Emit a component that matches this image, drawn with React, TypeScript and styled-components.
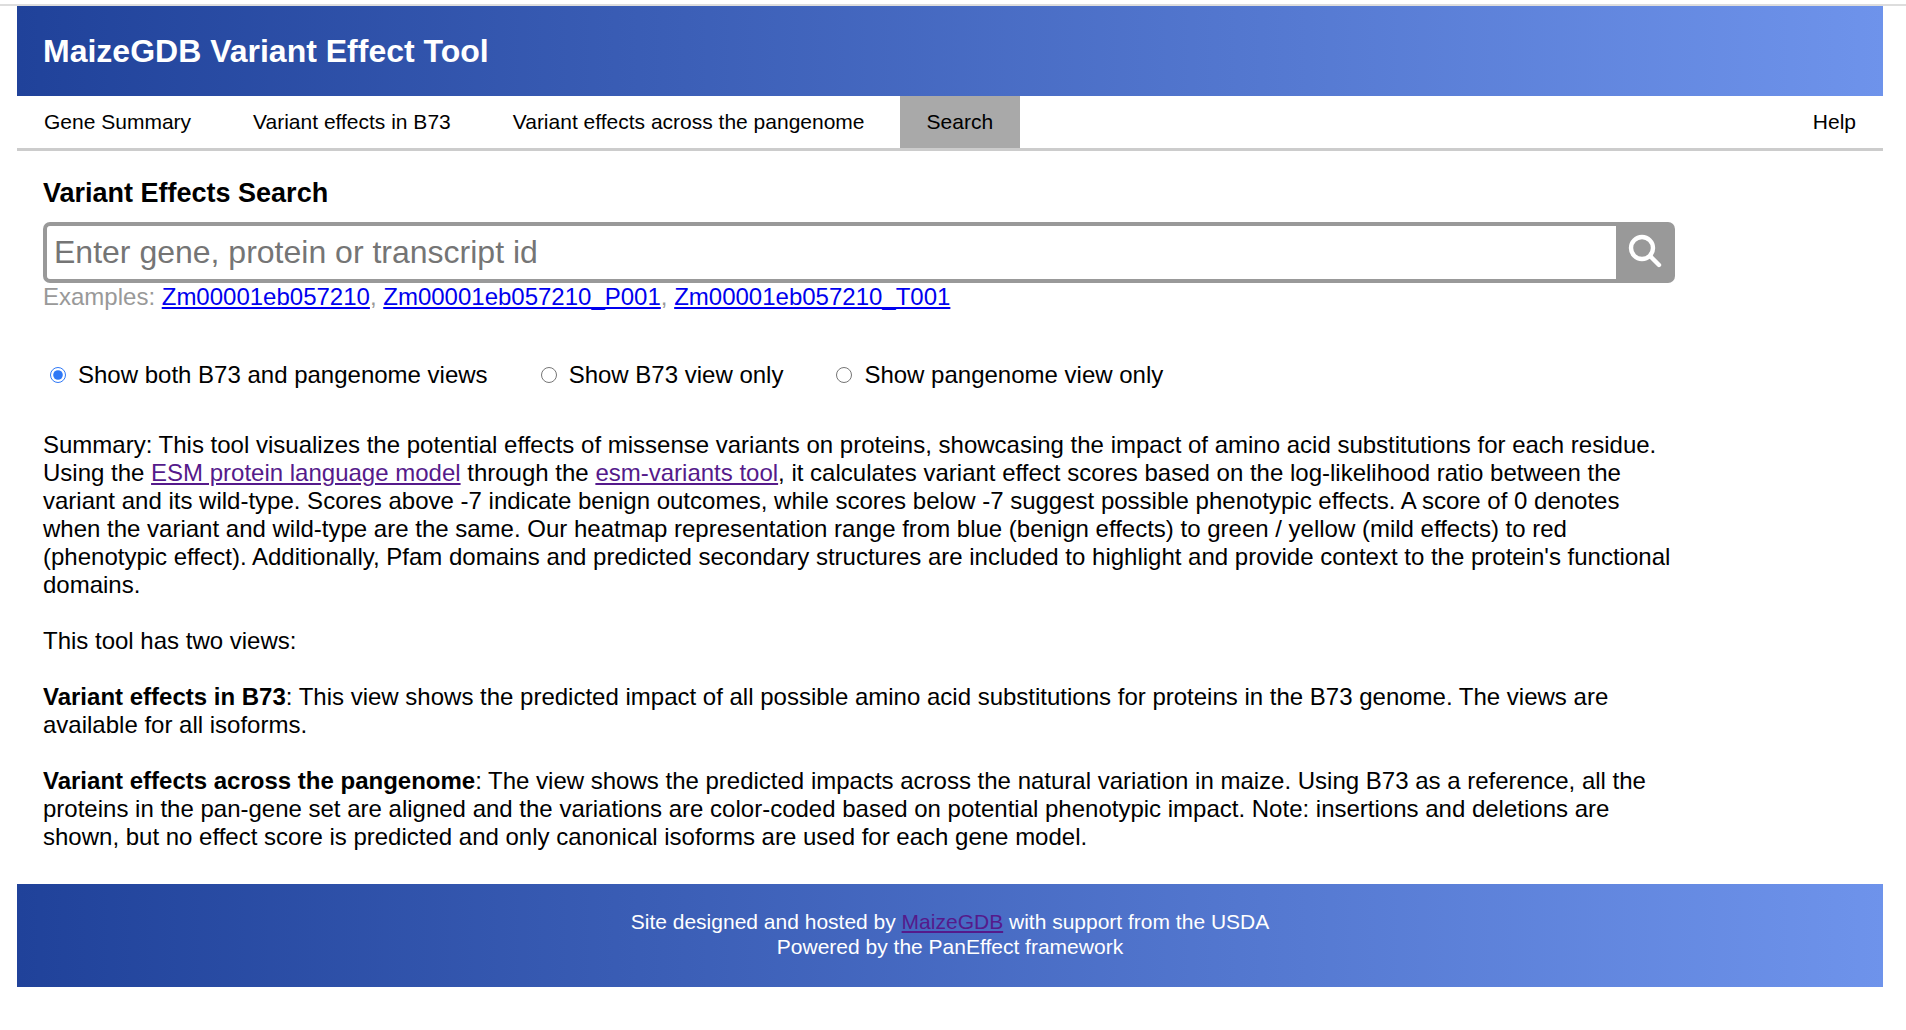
import React, { useState } from "react";
import styled, { createGlobalStyle } from "styled-components";

const GlobalStyle = createGlobalStyle`
  *, *::before, *::after { box-sizing: border-box; }
  body {
    margin: 0;
    background: #fff;
    color: #000;
    font-family: "Liberation Sans", Arial, Helvetica, sans-serif;
    font-size: 24px;
    line-height: 28px;
  }
`;

const brandGradient = "linear-gradient(to right, #20429a, #6e93eb)";

const Page = styled.div`
  margin-top: 4px;
  border-top: 2px solid #ddd;
  padding: 0 23px 0 17px;
`;

const Header = styled.header`
  padding: 27px 26px;
  background: ${brandGradient};
  color: #fff;
`;

const SiteTitle = styled.h1`
  margin: 0;
  font-size: 32px;
  line-height: 36px;
`;

const Nav = styled.nav`
  display: flex;
  gap: 8px;
  border-bottom: 3px solid #ccc;
`;

const Tab = styled.a<{ $active?: boolean; $end?: boolean }>`
  padding: 13px 27px 14px;
  margin-left: ${(p) => (p.$end ? "auto" : "0")};
  background: ${(p) => (p.$active ? "#a9a9a9" : "transparent")};
  color: #000;
  font-size: 21px;
  line-height: 25px;
  text-decoration: none;
`;

const Main = styled.main`
  padding: 27px 27px 33px 26px;
`;

const Column = styled.div`
  width: 90%;
`;

const Heading = styled.h2`
  margin: 0 0 13px;
  font-size: 27px;
  line-height: 31px;
`;

const SearchForm = styled.form`
  display: flex;
  height: 61px;
`;

const SearchInput = styled.input`
  flex: 1;
  min-width: 0;
  border: 4px solid #999;
  border-right: 0;
  border-radius: 7px 0 0 7px;
  padding: 0 7px;
  font-family: inherit;
  font-size: 32px;
  outline: none;
  &::placeholder { color: #757575; opacity: 1; }
`;

const SearchButton = styled.button`
  display: flex;
  justify-content: center;
  width: 59px;
  border: 0;
  border-radius: 0 7px 7px 0;
  padding: 12px 0 0;
  background: #999;
  color: #fff;
  cursor: pointer;
`;

const Examples = styled.div`
  color: #999;
`;

const Link = styled.a<{ $visited?: boolean }>`
  color: ${(p) => (p.$visited ? "#551a8b" : "#0000ee")};
  text-decoration: underline;
`;

const Options = styled.fieldset`
  display: flex;
  flex-wrap: wrap;
  gap: 53px;
  margin: 50px 0 42px;
  border: 0;
  padding: 0 7px;
`;

const Option = styled.label`
  display: flex;
  align-items: center;
  gap: 12px;
`;

const Radio = styled.input`
  width: 16px;
  height: 16px;
  margin: 0;
  accent-color: #2f78f6;
`;

const Paragraph = styled.p`
  margin: 0;
  & + & { margin-top: 28px; }
`;

const Footer = styled.footer`
  padding: 25px 26px 28px;
  background: ${brandGradient};
  color: #fff;
  font-size: 21px;
  line-height: 25px;
  text-align: center;
`;

const tabs = ["Gene Summary", "Variant effects in B73", "Variant effects across the pangenome", "Search"];

const examples = ["Zm00001eb057210", "Zm00001eb057210_P001", "Zm00001eb057210_T001"];

const views = ["Show both B73 and pangenome views", "Show B73 view only", "Show pangenome view only"];

function SearchIcon() {
  return (
    <svg width="34" height="34" viewBox="0 0 34 34" fill="none" stroke="currentColor" strokeWidth="4.4" aria-hidden="true">
      <circle cx="14" cy="14" r="11" />
      <path d="M22.3 22.3 L31 31" strokeLinecap="round" />
    </svg>
  );
}

export default function App() {
  const [view, setView] = useState(0);
  return (
    <>
      <GlobalStyle />
      <Page>
        <Header>
          <SiteTitle>MaizeGDB Variant Effect Tool</SiteTitle>
        </Header>
        <Nav>
          {tabs.map((tab) => (
            <Tab key={tab} href="#" $active={tab === "Search"}>{tab}</Tab>
          ))}
          <Tab href="#" $end>Help</Tab>
        </Nav>
        <Main>
          <Column>
            <Heading>Variant Effects Search</Heading>
            <SearchForm onSubmit={(e) => e.preventDefault()}>
              <SearchInput
                type="text"
                aria-label="Gene, protein or transcript id"
                placeholder="Enter gene, protein or transcript id"
              />
              <SearchButton type="submit" aria-label="Search">
                <SearchIcon />
              </SearchButton>
            </SearchForm>
            <Examples>
              Examples:{" "}
              {examples.map((id, i) => (
                <React.Fragment key={id}>
                  {i > 0 && ", "}
                  <Link href="#">{id}</Link>
                </React.Fragment>
              ))}
            </Examples>
            <Options>
              {views.map((label, i) => (
                <Option key={label}>
                  <Radio type="radio" name="view" checked={view === i} onChange={() => setView(i)} />
                  {label}
                </Option>
              ))}
            </Options>
            <Paragraph>
              Summary: This tool visualizes the potential effects of missense variants on proteins, showcasing the
              impact of amino acid substitutions for each residue. Using the{" "}
              <Link href="#" $visited>ESM protein language model</Link> through the{" "}
              <Link href="#" $visited>esm-variants tool</Link>, it calculates variant effect scores based on the
              log-likelihood ratio between the variant and its wild-type. Scores above -7 indicate benign outcomes,
              while scores below -7 suggest possible phenotypic effects. A score of 0 denotes when the variant and
              wild-type are the same. Our heatmap representation range from blue (benign effects) to green / yellow
              (mild effects) to red (phenotypic effect). Additionally, Pfam domains and predicted secondary structures
              are included to highlight and provide context to the protein's functional domains.
            </Paragraph>
            <Paragraph>This tool has two views:</Paragraph>
            <Paragraph>
              <b>Variant effects in B73</b>: This view shows the predicted impact of all possible amino acid
              substitutions for proteins in the B73 genome. The views are available for all isoforms.
            </Paragraph>
            <Paragraph>
              <b>Variant effects across the pangenome</b>: The view shows the predicted impacts across the natural
              variation in maize. Using B73 as a reference, all the proteins in the pan-gene set are aligned and the
              variations are color-coded based on potential phenotypic impact. Note: insertions and deletions are
              shown, but no effect score is predicted and only canonical isoforms are used for each gene model.
            </Paragraph>
          </Column>
        </Main>
        <Footer>
          Site designed and hosted by <Link href="#" $visited>MaizeGDB</Link> with support from the USDA
          <br />
          Powered by the PanEffect framework
        </Footer>
      </Page>
    </>
  );
}
